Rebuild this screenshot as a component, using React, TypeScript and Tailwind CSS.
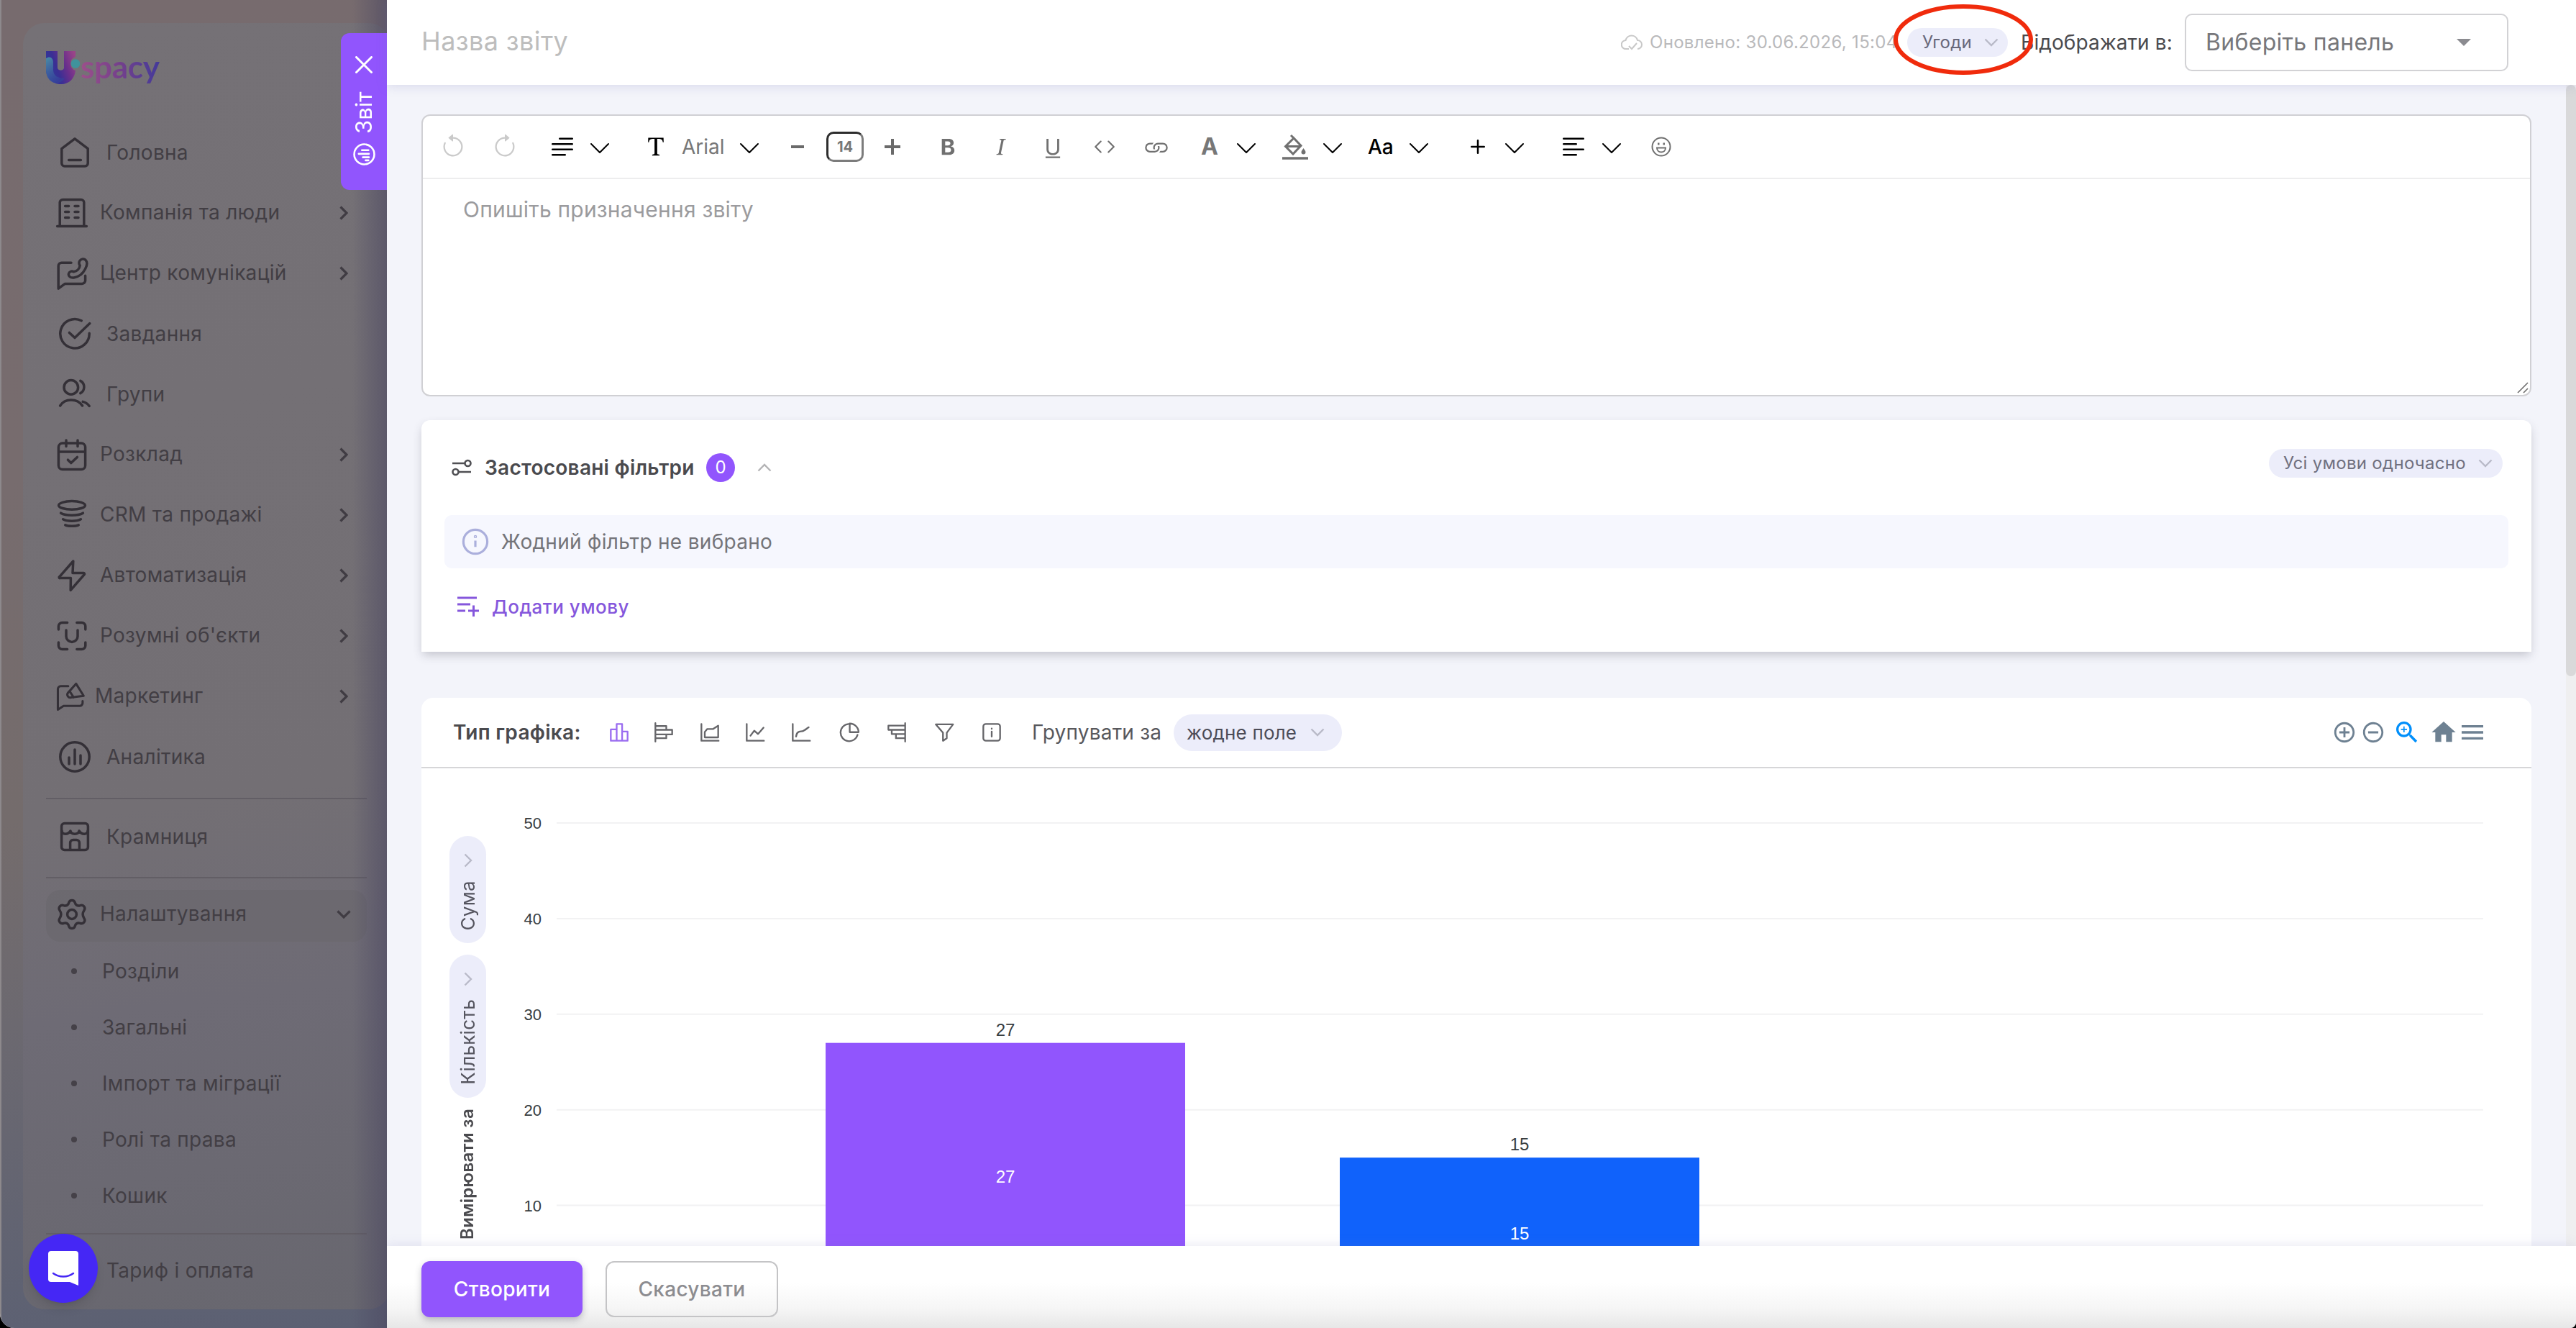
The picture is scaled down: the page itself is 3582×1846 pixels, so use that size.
import type { ReactNode } from "react";
import {
  BsArrowClockwise,
  BsArrowCounterclockwise,
  BsChevronDown,
  BsCode,
  BsFonts,
  BsLink,
  BsPlus,
  BsTextLeft,
  BsTextParagraph,
  BsTypeBold,
  BsTypeItalic,
  BsTypeUnderline,
} from "react-icons/bs";
import {
  MdAddCircleOutline,
  MdHome,
  MdMenu,
  MdRemoveCircleOutline,
  MdZoomIn,
} from "react-icons/md";

type IconProps = { className?: string; width?: number; children: ReactNode };

function Icon({ className = "size-12", width = 1.75, children }: IconProps) {
  return (
    <svg
      viewBox="0 0 24 24"
      className={`shrink-0 ${className}`}
      fill="none"
      stroke="currentColor"
      strokeWidth={width}
      strokeLinecap="round"
      strokeLinejoin="round"
    >
      {children}
    </svg>
  );
}

const navItems = [
  {
    label: "Головна",
    icon: <path d="M2.9 9.3 12 2.4l9.1 6.9v10.2a2 2 0 0 1-2 2H4.9a2 2 0 0 1-2-2zM7.8 17.3h8.4" />,
  },
  {
    label: "Компанія та люди",
    sub: true,
    icon: (
      <>
        <path d="M3.6 21V4.8a2 2 0 0 1 2-2h12.8a2 2 0 0 1 2 2V21M1.8 21.2h20.4" />
        <path d="M7.3 7.2h2.5M14 7.2h2.5M7.3 11.2h2.5M14 11.2h2.5M7.3 15.2h2.5M14 15.2h2.5" />
      </>
    ),
  },
  {
    label: "Центр комунікацій",
    sub: true,
    icon: (
      <>
        <path d="M11.500 4.600H4.800a2.200 2.200 0 0 0-2.200 2.200V22.600l4.600-3.400h11.900a2.200 2.200 0 0 0 2.200-2.200v-3.400" />
        <path d="M17.300 3.500c.8-1.600 2.900-2 4.200-.8 1.300 1.300 1 3.900-.2 6.200-1.600 3.200-4.600 5.600-8 6.100-2.400.3-3.800-1.100-3.600-2.600.3-1.600 2.100-2.300 3.500-1.500 2.400-.4 4.100-2.300 4.400-4.400-.7-.9-.8-2-.3-3z" />
      </>
    ),
  },
  {
    label: "Завдання",
    icon: (
      <>
        <path d="M16.600 2.900A10.100 10.100 0 1 0 22.100 11.600" />
        <path d="m8.200 11.200 3.800 3.600L22.400 4.800" />
      </>
    ),
  },
  {
    label: "Групи",
    icon: (
      <>
        <circle cx="9.400" cy="7.200" r="4.900" />
        <path d="M15.900 2.700a4.900 4.900 0 0 1 0 8.600M1.800 20c3.200-5.400 12-5.400 15.500 0M17.600 17.200c1.900.5 3.500 1.600 4.500 3" />
      </>
    ),
  },
  {
    label: "Розклад",
    sub: true,
    icon: (
      <>
        <rect x="2.700" y="4" width="18.600" height="18.300" rx="2.800" />
        <path d="M8 2v4.300M16 2v4.300M3 10h18M9.200 15.600l2.200 2.200 4.300-4.100" />
      </>
    ),
  },
  {
    label: "CRM та продажі",
    sub: true,
    icon: (
      <>
        <ellipse cx="12" cy="5.200" rx="9.200" ry="2.900" />
        <path d="M4.300 10.600c3.400 2 12 2 15.400 0M5.800 14.900c2.900 1.600 9.500 1.600 12.400 0M7.400 18.900c2 .9 7.200.9 9.200 0" />
      </>
    ),
  },
  {
    label: "Автоматизація",
    sub: true,
    icon: <path d="M12.900 2 3.300 12.900a.5.5 0 0 0 .4.900h7.500L11.100 22.200l9.500-10.900a.6.600 0 0 0-.5-1h-7.600z" />,
  },
  {
    label: "Розумні об'єкти",
    sub: true,
    icon: (
      <path d="M2.700 7.500V5.300a2.500 2.500 0 0 1 2.500-2.500h3.600M15.400 2.800h3.500a2.500 2.500 0 0 1 2.500 2.500v2.200M2.700 16.500v2.200a2.500 2.500 0 0 0 2.500 2.500h3.600M15.400 21.200h3.500a2.500 2.500 0 0 0 2.500-2.500v-2.200M8 8v4.200a4 4 0 0 0 8 0V8" />
    ),
  },
  {
    label: "Маркетинг",
    sub: true,
    small: true,
    icon: (
      <>
        <path d="M10.500 3.800H4.700a2.200 2.200 0 0 0-2.200 2.200v16l4.400-2.900h12.600a2.200 2.200 0 0 0 2.200-2.200v-1.600" />
        <path d="m16.600 1.900 5.900 9.400-9.800 1.300a2.300 2.300 0 0 1-2.400-3.600zM12 8.200l2.700 4.300" />
      </>
    ),
  },
  {
    label: "Аналітика",
    icon: (
      <>
        <circle cx="12" cy="12" r="10.100" />
        <path d="M8 12.500v4.500M12 7v10M16 11v6" />
      </>
    ),
  },
];

const settingsItems = ["Розділи", "Загальні", "Імпорт та міграції", "Ролі та права", "Кошик"];

const shopIcon = (
  <>
    <rect x="2.800" y="2.800" width="18.400" height="18.400" rx="2" />
    <path d="M3 8c0 2.800 4.300 2.800 6 0 .5 2.800 5.500 2.800 6 0 1.700 2.800 6 2.800 6 0M8.800 21v-4.700a2 2 0 0 1 2-2h2.400a2 2 0 0 1 2 2V21" />
  </>
);

const gearIcon = (
  <>
    <circle cx="12" cy="12" r="3.200" />
    <path d="M9.900 3.800a2.200 2.200 0 0 1 4.200 0c.4 1.800 1.900 2.600 3.600 2a2.300 2.300 0 0 1 2.800 3.400c-1.200 1.800-1.200 3.800 0 5.600a2.300 2.300 0 0 1-2.800 3.400c-1.700-.6-3.200.2-3.600 2a2.200 2.200 0 0 1-4.200 0c-.4-1.800-1.900-2.600-3.600-2a2.300 2.300 0 0 1-2.800-3.400c1.200-1.800 1.200-3.800 0-5.600a2.300 2.300 0 0 1 2.800-3.400c1.700.6 3.200-.2 3.600-2z" />
  </>
);

function Chevron({ className = "" }: { className?: string }) {
  return (
    <svg viewBox="0 0 20 12" className={`h-3 w-5 shrink-0 ${className}`} fill="none" stroke="currentColor" strokeWidth="2.400">
      <path d="m1.500 1.500 8.500 8.500 8.500-8.500" />
    </svg>
  );
}

function Logo() {
  return (
    <div className="ml-8 flex h-[48px] items-start">
      <svg viewBox="0 0 50 48" className="h-12 w-[50px]">
        <defs>
          <linearGradient id="logo-u" x1="0" y1="0.600" x2="1" y2="0.200">
            <stop offset="0" stopColor="#2f3c9c" />
            <stop offset="0.350" stopColor="#3a2f94" />
            <stop offset="0.650" stopColor="#6a2f8c" />
            <stop offset="1" stopColor="#9a4488" />
          </linearGradient>
          <linearGradient id="logo-side" x1="0" y1="0" x2="0.500" y2="1">
            <stop offset="0" stopColor="#4a8fa6" />
            <stop offset="1" stopColor="#35459c" stopOpacity="0.600" />
          </linearGradient>
        </defs>
        <path d="M0 0h16v24a5 5 0 0 0 9 0V0h16v8a10 10 0 0 0 0 19C40 38 32 46 21 46 9 46 0 38 0 26z" fill="url(#logo-u)" />
        <path d="M0 10c6-4 10 0 10 6v10c0 9 8 12 16 12-8 11-26 8-26-12z" fill="url(#logo-side)" />
        <circle cx="41" cy="17.500" r="6.300" fill="#3f939c" />
      </svg>
      <span className="-mt-[5px] -ml-0.5 bg-linear-to-r from-[#9d4f8b] via-[#743f8c] to-[#43399a] bg-clip-text pb-2 font-['Lato'] text-[44px] leading-[52px] font-bold tracking-[-0.300px] text-transparent">
        spacy
      </span>
    </div>
  );
}

function Divider() {
  return <div className="mx-8 h-[2px] w-[446px] shrink-0 bg-[#625e65]" />;
}

function Sidebar() {
  return (
    <aside className="relative w-[538px] shrink-0 overflow-hidden border-l-2 border-[#8d898c] bg-[linear-gradient(174deg,#776b6e_0%,#776c6e_35%,#746c6c_60%,#6c6970_75%,#5b6073_100%)]">
      <div className="mt-8 ml-[30px] flex h-[1788px] w-[510px] flex-col rounded-[30px] bg-[linear-gradient(172deg,#757176_0%,#736f74_60%,#6e6b75_75%,#68676f_100%)] pt-[39px] text-[28px] tracking-[0.3px] text-[#423e44]">
        <Logo />
        <nav className="mt-[51px] flex flex-col">
          {navItems.map((item) => (
            <div key={item.label} className={`flex h-[84px] items-center ${item.sub ? "pl-11" : "pl-12"}`}>
              <Icon className={`text-[#343037] ${item.small ? "size-[43px]" : "size-12"}`} width={item.small ? 1.7 : 1.75}>
                {item.icon}
              </Icon>
              <span className={`flex-1 ${item.small ? "ml-[13px]" : item.sub ? "ml-[15px]" : "ml-[20px]"} ${item.sub ? "pb-[3px]" : ""}`}>{item.label}</span>
              {item.sub && <Chevron className="mr-[54px] -rotate-90 stroke-[3.2] text-[#403c43]" />}
            </div>
          ))}
        </nav>
        <div className="h-[15px]" />
        <Divider />
        <div className="flex h-[108px] items-center pb-1 pl-12">
          <Icon className="size-12 text-[#343037]">{shopIcon}</Icon>
          <span className="ml-[20px]">Крамниця</span>
        </div>
        <Divider />
        <div className="mx-8 mt-4 flex h-[72px] w-[446px] shrink-0 items-center rounded-[20px] bg-[#6b686d]/70 pb-1 pl-3">
          <Icon className="size-12 text-[#343037]">{gearIcon}</Icon>
          <span className="ml-[15px] flex-1 pb-[3px]">Налаштування</span>
          <Chevron className="mr-[22px] stroke-[3.2] text-[#403c43]" />
        </div>
        <div className="mt-[2px] mb-[13px] flex flex-col">
          {settingsItems.map((label) => (
            <div key={label} className="flex h-[78px] items-center pl-[67px]">
              <span className="size-2 rounded-full bg-[#454148]" />
              <span className="ml-[35px]">{label}</span>
            </div>
          ))}
        </div>
        <Divider />
        <div className="flex h-[100px] items-center pl-[116px]">Тариф і оплата</div>
      </div>
      {/* drawer shadow over the dimmed page */}
      <div className="absolute inset-y-0 right-0 w-12 bg-linear-to-r from-transparent to-[#4c4862]/60" />
      <button className="absolute top-[1715px] left-[38px] flex size-24 items-center justify-center rounded-full bg-[#4527f5] shadow-lg">
        <svg viewBox="0 0 44 50" className="h-[50px] w-11">
          <path d="M5 1h34a4 4 0 0 1 4 4v44l-12-5H5a4 4 0 0 1-4-4V5a4 4 0 0 1 4-4z" fill="#fff" />
          <path d="M8 32c8 6 20 6 28 0" fill="none" stroke="#4527f5" strokeWidth="2.400" strokeLinecap="round" />
        </svg>
      </button>
    </aside>
  );
}

function DrawerTab() {
  return (
    <div className="absolute top-[46px] left-[474px] flex h-[218px] w-16 flex-col items-center rounded-l-xl bg-[#9155fd] pt-8 text-white">
      <Icon className="size-6" width={3}>
        <path d="M1.500 1.500l21 21M22.500 1.500l-21 21" />
      </Icon>
      <span className="mt-[23px] h-[64px] rotate-180 text-center text-[31px] leading-8 whitespace-nowrap [writing-mode:vertical-rl]">
        Звіт
      </span>
      <Icon className="mt-[10px] size-[31px]" width={2}>
        <circle cx="12" cy="12" r="10.800" />
        <path d="M9.500 7.500h7M6 11.500h11M10.500 15.200h6.500M13.500 18.500h3" />
      </Icon>
    </div>
  );
}

function Header() {
  return (
    <header className="relative z-10 flex h-[118px] shrink-0 items-center bg-white pl-12 shadow-[0_2px_14px_rgba(120,120,180,0.220)]">
      <h1 className="-mt-1 w-[1668px] text-[36px] tracking-[0.400px] text-[#bdbdbd]">Назва звіту</h1>
      <svg viewBox="0 0 30 22" className="h-[22px] w-[30px]" fill="none" stroke="#c8c8c8" strokeWidth="2">
        <path d="M11 20H7a6 6 0 0 1-.5-12A8.500 8.500 0 0 1 23 8a6 6 0 0 1 0 12M11 16l4 4 7-8" />
      </svg>
      <span className="ml-[10px] w-[358px] text-[24px] tracking-[0.300px] whitespace-nowrap text-[#b9b9bb]">Оновлено: 30.06.2026, 15:04</span>
      <div className="flex h-10 w-[140px] items-center rounded-full bg-[#ecedfa] pl-[21px] text-[24px] text-[#68687a]">
        <span className="w-[86px] tracking-[0.200px]">Угоди</span>
        <Chevron className="text-[#b9bac8]" />
      </div>
      <span className="ml-[18px] w-[228px] pb-px text-[28px] tracking-[0.100px] whitespace-nowrap text-[#4a4a4e]">Відображати в:</span>
      <div className="flex h-20 w-[450px] items-center rounded-[10px] border-2 border-[#d2d2d5] pl-[27px] text-[32px] tracking-[0.300px] text-[#77777b]">
        <span className="w-[349px]">Виберіть панель</span>
        <span className="h-0 w-0 border-x-10 border-t-10 border-x-transparent border-t-[#8b8b90]" />
      </div>
      <svg viewBox="0 0 200 100" className="absolute top-[5px] left-[2092px] h-[100px] w-[200px]">
        <ellipse cx="100" cy="50" rx="94" ry="46" fill="none" stroke="#f02b0c" strokeWidth="6" />
      </svg>
    </header>
  );
}

function Caret({ className }: { className: string }) {
  return <BsChevronDown className={`mt-1 size-8 shrink-0 text-black ${className}`} />;
}

function Editor() {
  return (
    <section className="relative flex h-[392px] shrink-0 flex-col rounded-xl border-2 border-[#d0d0d4] bg-white">
      <div className="flex h-[88px] shrink-0 items-center border-b-2 border-[#ededee] text-[#707070]">
        <BsArrowCounterclockwise className="ml-6 size-9 shrink-0 text-[#cacaca]" />
        <BsArrowClockwise className="ml-9 size-9 shrink-0 text-[#cacaca]" />
        <BsTextParagraph className="ml-[42px] size-10 shrink-0 text-black" />
        <Caret className="ml-4" />
        <BsFonts className="ml-[42px] size-10 shrink-0 text-black" />
        <span className="ml-4 w-[58px] text-[28px] text-[#777]">Arial</span>
        <Caret className="ml-5" />
        <span className="ml-[42px] h-1 w-[18px] bg-[#6a6a6a]" />
        <span className="ml-[31px] flex h-[42px] w-[52px] items-center justify-center rounded-[10px] border-[3.500px] border-t-[#2d2d2d] border-r-[#7c7c7c] border-b-[#7c7c7c] border-l-[#2d2d2d] text-[20px] font-bold text-[#777]">
          14
        </span>
        <svg viewBox="0 0 22 22" className="ml-[29px] size-[22px] shrink-0">
          <path d="M11 0v22M0 11h22" stroke="#6a6a6a" strokeWidth="4" />
        </svg>
        <BsTypeBold className="ml-[49px] size-9 shrink-0" />
        <BsTypeItalic className="ml-[37px] size-9 shrink-0" />
        <BsTypeUnderline className="ml-9 size-9 shrink-0" />
        <BsCode className="ml-[37px] size-[34px] shrink-0" />
        <BsLink className="ml-[37px] size-9 shrink-0" />
        <span className="ml-[44px] w-6 text-[32px] font-bold text-[#777]">A</span>
        <Caret className="ml-[23px]" />
        <svg viewBox="0 0 36 36" className="ml-[34px] size-9 shrink-0" fill="none" stroke="currentColor" strokeWidth="3">
          <path d="M12 2l4 4M16 6 4.500 17.500 15 28l11-11.500zM6 17.500h19" />
          <path d="M29.500 20c2 3 3 4 3 5.500a3 3 0 0 1-6 0c0-1.500 1-2.500 3-5.500z" fill="currentColor" stroke="none" />
          <path d="M0 34h36" strokeWidth="3.500" />
        </svg>
        <Caret className="ml-[18px]" />
        <span className="ml-[33px] w-10 text-[28px] font-medium text-black">Aa</span>
        <Caret className="ml-[15px]" />
        <BsPlus className="ml-[46px] size-10 shrink-0 text-black" />
        <Caret className="ml-[15px]" />
        <BsTextLeft className="ml-[46px] size-10 shrink-0 text-black" />
        <Caret className="ml-[17px]" />
        <svg viewBox="0 0 28 28" className="ml-[39px] size-7 shrink-0" fill="none" stroke="currentColor" strokeWidth="2">
          <circle cx="14" cy="14" r="12.500" />
          <path d="M8 15.500h12c0 8-12 8-12 0z" />
          <path d="M9 10h2.500M16.500 10H19" strokeWidth="2.800" />
        </svg>
      </div>
      <p className="mt-[21px] ml-14 text-[30px] leading-[42px] tracking-[0.200px] text-[#9b9b9e]">Опишіть призначення звіту</p>
      <svg viewBox="0 0 16 16" className="absolute right-0.5 bottom-0.5 size-4" stroke="#6f6f6f" strokeWidth="1.600">
        <path d="M1 15 15 1M9 15l6-6" />
      </svg>
    </section>
  );
}

function Filters() {
  return (
    <section className="mt-[33px] flex h-[322px] shrink-0 flex-col rounded-t-xl bg-white px-8 shadow-[0_6px_14px_-2px_rgba(60,60,80,0.280)]">
      <div className="flex h-[132px] items-center">
        <svg viewBox="0 0 28 24" className="ml-[10px] h-6 w-7 shrink-0" fill="none" stroke="#505054" strokeWidth="2.600">
          <path d="M1 6h17M10 18h17" />
          <circle cx="22.500" cy="6" r="4" />
          <circle cx="5.500" cy="18" r="4" />
        </svg>
        <h2 className="ml-[18px] w-[308px] text-[28px] font-semibold tracking-[0.250px] whitespace-nowrap text-[#4a4a4e]">Застосовані фільтри</h2>
        <span className="flex size-10 items-center justify-center rounded-full bg-[#9155fd] text-[24px] text-white">0</span>
        <Chevron className="ml-[31px] rotate-180 text-[#b3b3b5]" />
        <div className="mr-2 mb-3 ml-auto flex h-10 w-[325px] items-center rounded-full bg-[#ecedfa] pl-5 text-[24px] text-[#70707f]">
          <span className="w-[271px] tracking-[0.300px]">Усі умови одночасно</span>
          <Chevron className="text-[#b9bac8]" />
        </div>
      </div>
      <div className="flex h-[74px] items-center rounded-[10px] bg-[#f6f7fe] pl-6">
        <Icon className="size-[38px] text-[#abafdc]" width={2}>
          <circle cx="12" cy="12" r="10.500" />
          <path d="M12 11v5.500M12 7.400v.2" strokeLinecap="butt" />
          <circle cx="12" cy="7.500" r="0.400" />
        </Icon>
        <span className="ml-[17px] text-[28px] tracking-[0.300px] text-[#747479]">Жодний фільтр не вибрано</span>
      </div>
      <div className="mt-[35px] flex h-9 items-center text-[#8557dc]">
        <svg viewBox="0 0 30 28" className="ml-[18px] h-7 w-[30px] shrink-0" stroke="currentColor" strokeWidth="3">
          <path d="M0 2h27M0 11h18M0 20h11M15 20h15M22.500 12.500V28" />
        </svg>
        <span className="ml-[18px] text-[26px] font-medium tracking-[0.500px]">Додати умову</span>
      </div>
    </section>
  );
}

const chartTypes = [
  { id: "columns", color: "text-[#9a6cf0]", space: "ml-0", d: "M2 8.500h7V22H2zM9 2h6.500v20H9zM15.500 11H22v11h-6.500z" },
  { id: "rows", space: "ml-[34px]", d: "M2 1v22M2 4.500h13V9H2M15 9h7v5.500H2M15 14.500V19H2" },
  { id: "area", space: "ml-[36px]", d: "M2 2v20h20.500M6 18v-6.500L9 8h7l6-4v14z" },
  { id: "line", space: "ml-[35px]", d: "M2 2v20h20.500M6.500 16l4.500-6 4.500 4L22 6.500" },
  { id: "curve", space: "ml-[36px]", d: "M2 2v20h20.500M6 17c1-8 6-5 9-7 2.500-1 4-3 6-4" },
  { id: "pie", space: "ml-[39px]", d: "M11 2a10.300 10.300 0 1 0 10.800 13M12.500 1.500v10.300H23A10.500 10.500 0 0 0 12.500 1.500z" },
  { id: "pyramid", space: "ml-[38px]", d: "M22 1v22M22 4H2v5h20M6 9v5h16M11 14v5h11" },
  { id: "funnel", space: "ml-[38px]", d: "M2 2.500h20.500L15 12.500V19l-4.500 3v-9.500z" },
  { id: "info", space: "ml-[38px]", d: "M5 2h14a3 3 0 0 1 3 3v14a3 3 0 0 1-3 3H5a3 3 0 0 1-3-3V5a3 3 0 0 1 3-3zM12 11v6M12 7.500v.2" },
];

function ChartToolbar() {
  return (
    <div className="flex h-[98px] shrink-0 items-center border-b-2 border-[#d6d6d8] pl-11 text-[28px]">
      <h2 className="w-[217px] font-semibold tracking-[0.300px] text-[#4a4a4e]">Тип графіка:</h2>
      {chartTypes.map((type) => (
        <Icon key={type.id} className={`size-7 ${type.space} ${type.color ?? "text-[#66666a]"}`} width={2}>
          <path d={type.d} />
        </Icon>
      ))}
      <span className="ml-[42px] w-[197px] tracking-[0.200px] text-[#58585c]">Групувати за</span>
      <div className="flex h-[51px] w-[234px] items-center rounded-full bg-[#ecedfa] pl-[18px] text-[#4c4c57]">
        <span className="w-[172px] text-[26px] tracking-[0.200px]">жодне поле</span>
        <Chevron className="text-[#b9bac8]" />
      </div>
      <div className="mr-[62px] ml-auto flex items-center text-[#6e8192]">
        <MdAddCircleOutline className="size-[34px]" />
        <MdRemoveCircleOutline className="ml-[6px] size-[34px]" />
        <MdZoomIn className="ml-[10px] size-10 text-[#008ffb]" />
        <MdHome className="ml-[11px] size-10" />
        <MdMenu className="size-10" />
      </div>
    </div>
  );
}

function MeasurePill({ label, height }: { label: string; height: string }) {
  return (
    <div className={`flex w-[51px] shrink-0 flex-col items-center rounded-full bg-[#ecedfa] ${height}`}>
      <Chevron className="mt-7 -rotate-90 text-[#b9bac8]" />
      <span className="mt-[22px] rotate-180 text-[26px] leading-8 tracking-[0.300px] whitespace-nowrap text-[#55555f] [writing-mode:vertical-rl]">
        {label}
      </span>
    </div>
  );
}

const bars = [
  { value: 27, x: 447, color: "#9155fd", inner: 567 },
  { value: 15, x: 1162, color: "#1062fb", inner: 646 },
];

// 50 sits at the top grid line, one unit is 13.29px
const yOf = (value: number) => 76 + (50 - value) * 13.29;

function Chart() {
  return (
    <svg viewBox="0 0 2819 664" className="h-[664px] w-[2819px] shrink-0 font-['Liberation_Sans']">
      {[50, 40, 30, 20, 10].map((tick) => (
        <g key={tick}>
          <path d={`M73 ${yOf(tick)}H2752`} stroke="#f2f2f3" strokeWidth="2" />
          <text x="52" y={yOf(tick) + 8} textAnchor="end" fontSize="22" fill="#373d3f">
            {tick}
          </text>
        </g>
      ))}
      {bars.map((bar) => (
        <g key={bar.value} fontSize="24" textAnchor="middle">
          <rect x={bar.x} y={yOf(bar.value)} width="500" height="500" fill={bar.color} />
          <text x={bar.x + 250} y={yOf(bar.value) - 10} fill="#373d3f">
            {bar.value}
          </text>
          <text x={bar.x + 250} y={bar.inner + 9} fill="#fff">
            {bar.value}
          </text>
        </g>
      ))}
    </svg>
  );
}

function ChartCard() {
  return (
    <section className="mt-16 flex flex-1 flex-col overflow-hidden rounded-t-2xl bg-white">
      <ChartToolbar />
      <div className="flex">
        <div className="flex w-[115px] shrink-0 flex-col items-start pt-[94px] pl-[39px]">
          <MeasurePill label="Сума" height="h-[149px]" />
          <div className="h-4" />
          <MeasurePill label="Кількість" height="h-[199px]" />
          <span className="mt-[15px] ml-[9px] rotate-180 text-[24px] leading-8 font-semibold tracking-[0.300px] whitespace-nowrap text-[#4a4a4e] [writing-mode:vertical-rl]">
            Вимірювати за
          </span>
        </div>
        <Chart />
      </div>
    </section>
  );
}

export default function App() {
  return (
    <div className="h-[1846px] w-[3582px] bg-black">
      <div className="relative flex h-full overflow-hidden rounded-br-[8px] rounded-bl-[20px] bg-[#f3f4fa] font-['Inter',sans-serif]">
        <Sidebar />
        <div className="flex min-w-0 flex-1 flex-col">
          <Header />
          <div className="flex h-[1614px] shrink-0 overflow-hidden">
            <main className="flex w-[3030px] shrink-0 flex-col overflow-hidden pt-[41px] pr-[48px] pl-12">
              <Editor />
              <Filters />
              <ChartCard />
            </main>
            <div className="w-[14px] bg-[#efeff0]">
              <div className="h-[822px] rounded-full bg-[#d9d9da]" />
            </div>
          </div>
          <footer className="flex h-[114px] items-start bg-[linear-gradient(180deg,#fff_45%,#f6f6f6_75%,#e7e7e7_100%)] pt-[21px] pl-12 text-[28px] font-medium shadow-[0_-2px_14px_rgba(120,120,180,0.150)]">
            <button className="h-[78px] w-[224px] rounded-xl bg-[#9155fd] tracking-[0.300px] text-white shadow-[0_4px_10px_rgba(60,60,80,0.300)]">
              Створити
            </button>
            <button className="ml-8 h-[78px] w-[240px] rounded-xl border-2 border-[#c4c4c6] tracking-[0.300px] text-[#8c8c90]">
              Скасувати
            </button>
          </footer>
        </div>
        <DrawerTab />
      </div>
    </div>
  );
}
